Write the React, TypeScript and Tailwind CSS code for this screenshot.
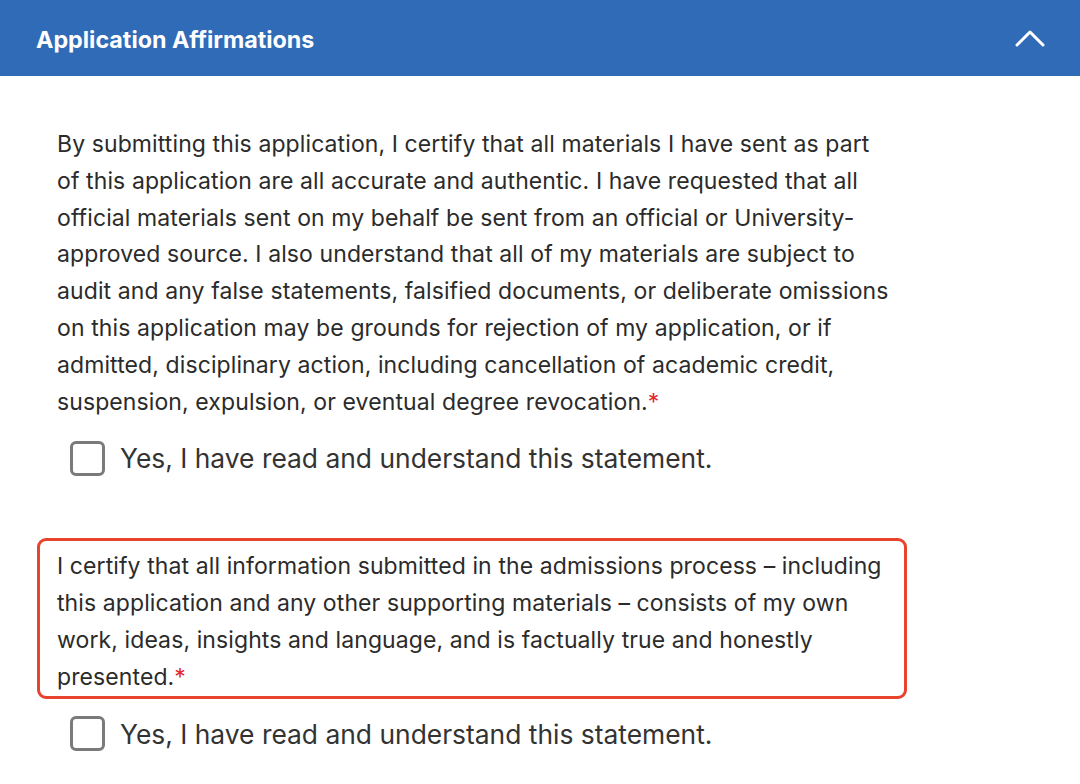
import { useState } from "react";

const font = { fontFamily: "Inter, 'Noto Sans', sans-serif" };

function Checkbox({ label }: { label: string }) {
  const [checked, setChecked] = useState(false);
  return (
    <label className="flex items-center gap-[15px] ml-[33px] mt-[17px] cursor-pointer select-none">
      <span
        onClick={() => setChecked(!checked)}
        className="w-[35px] h-[35px] rounded-[6px] border-[3px] border-[#7a7a7a] bg-white flex items-center justify-center shrink-0"
      >
        {checked && (
          <svg width="20" height="20" viewBox="0 0 20 20" fill="none">
            <path d="M4 10l4 4 8-8" stroke="#2f6bb7" strokeWidth="3" strokeLinecap="round" strokeLinejoin="round" />
          </svg>
        )}
      </span>
      <span className="text-[26.4px] leading-[36px] text-[#333333]">{label}</span>
    </label>
  );
}

function Statement({ lines, highlight }: { lines: string[]; highlight?: boolean }) {
  return (
    <div
      className={
        "w-[870px] rounded-[9px] border-[3px] px-[17px] pt-[7px] pb-0 " +
        (highlight ? "border-[#e8432d]" : "border-transparent")
      }
    >
      <p className="text-[23px] tracking-[0.1px] leading-[36.8px] text-[#2b2b2b] whitespace-nowrap">
        {lines.map((l, i) => (
          <span key={i} className="block">
            {l}
            {i === lines.length - 1 && <span className="text-[#e0282e]">*</span>}
          </span>
        ))}
      </p>
    </div>
  );
}

export default function App() {
  const [open, setOpen] = useState(true);
  return (
    <div className="w-[1080px] h-[784px] bg-white overflow-hidden" style={font}>
      <header className="h-[76px] bg-[#2f6bb7] flex items-center justify-between pl-[36px] pr-[34px]">
        <h2 className="text-white text-[23.3px] leading-[30px] mt-[4px] font-bold">Application Affirmations</h2>
        <button onClick={() => setOpen(!open)} className="w-[32px] h-[32px] flex items-center justify-center">
          <svg width="30" height="18" viewBox="0 0 30 18" fill="none">
            <path d="M2 16L15 3l13 13" stroke="white" strokeWidth="3" strokeLinecap="round" strokeLinejoin="round" />
          </svg>
        </button>
      </header>
      {open && (
        <div className="pl-[37px] pt-[40px]">
          <Statement
            lines={[
              "By submitting this application, I certify that all materials I have sent as part",
              "of this application are all accurate and authentic. I have requested that all",
              "official materials sent on my behalf be sent from an official or University-",
              "approved source. I also understand that all of my materials are subject to",
              "audit and any false statements, falsified documents, or deliberate omissions",
              "on this application may be grounds for rejection of my application, or if",
              "admitted, disciplinary action, including cancellation of academic credit,",
              "suspension, expulsion, or eventual degree revocation.",
            ]}
          />
          <Checkbox label="Yes, I have read and understand this statement." />
          <div className="h-[62px]" />
          <Statement
            highlight
            lines={[
              "I certify that all information submitted in the admissions process – including",
              "this application and any other supporting materials – consists of my own",
              "work, ideas, insights and language, and is factually true and honestly",
              "presented.",
            ]}
          />
          <Checkbox label="Yes, I have read and understand this statement." />
        </div>
      )}
    </div>
  );
}
